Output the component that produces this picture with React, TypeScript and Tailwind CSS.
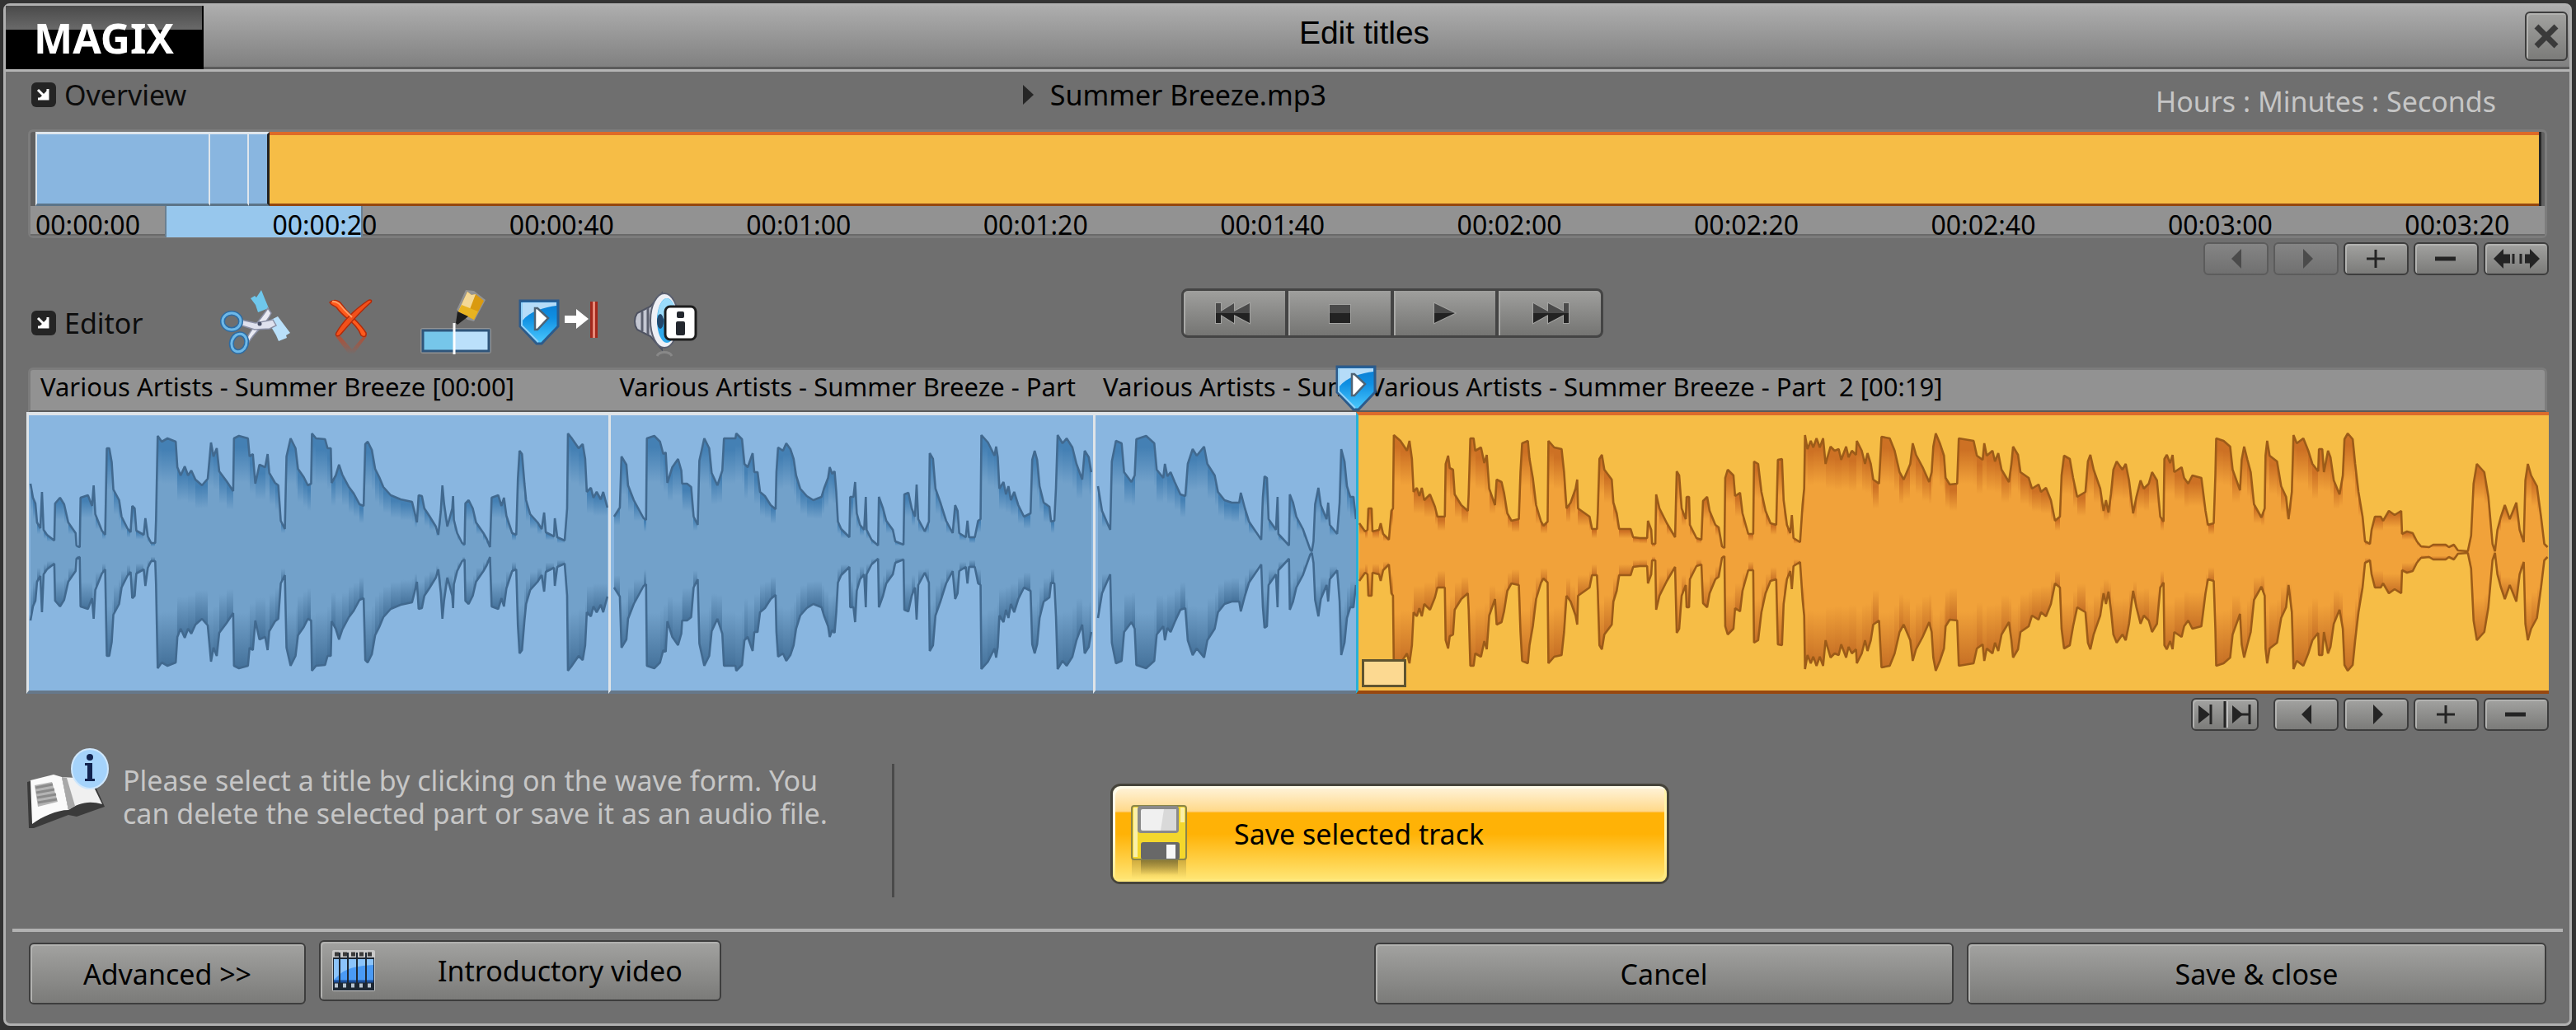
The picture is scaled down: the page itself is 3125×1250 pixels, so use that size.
import type { ReactNode } from 'react';

type Tone = 'blue' | 'orange';

interface Clip {
  id: string;
  title: string;
  from: number;
  to: number;
  tone: Tone;
  // "x,amplitude" pairs along the timeline
  wave: string;
}

const CLIPS: Clip[] = [
  {
    id: 'clip1',
    title: 'Various Artists - Summer Breeze [00:00]',
    from: 32,
    to: 738,
    tone: 'blue',
    wave:
      '34,83 37,66 40,59 42,36 46,29 48,73 50,27 54,21 63,14 64,59 70,66 75,58 80,36 89,23 90,8 94,6 95,66 104,69 109,56 111,81 113,46 121,26 125,21 127,126 130,126 133,109 135,76 142,63 145,43 152,29 156,24 158,56 161,53 163,26 172,21 174,41 177,19 181,11 186,11 187,39 189,141 194,134 201,138 211,134 213,103 217,93 222,104 226,93 230,99 235,88 243,81 250,89 254,133 257,116 261,126 264,98 273,86 281,74 282,138 288,141 299,138 301,116 305,119 308,83 313,106 320,103 323,119 325,96 332,84 336,81 339,38 344,28 346,116 351,138 357,126 360,101 367,91 372,81 376,83 377,144 382,138 393,137 396,126 400,126 401,84 406,93 410,106 414,94 422,79 428,71 435,58 440,56 442,131 445,134 450,124 454,101 459,91 464,79 473,69 485,64 499,61 502,49 505,36 507,69 511,68 514,53 520,44 528,31 531,21 534,49 536,81 538,59 542,31 548,53 549,68 550,39 554,23 560,11 563,9 564,59 568,63 573,53 577,36 586,23 590,16 594,6 596,66 604,69 608,56 611,66 614,44 621,23 626,21 628,89 630,123 633,119 636,83 638,63 643,46 652,36 657,28 660,48 662,24 672,19 673,41 676,18 685,14 688,53 689,144 693,139 702,126 707,131 710,113 712,73 717,78 720,66 724,73 729,64 732,73 737,54',
  },
  {
    id: 'clip2',
    title: 'Various Artists - Summer Breeze - Part',
    from: 738,
    to: 1326,
    tone: 'blue',
    wave:
      '742,43 749,54 751,116 757,106 759,81 766,63 778,41 781,39 782,138 791,141 798,134 802,119 805,121 807,84 813,103 820,113 824,99 825,83 831,83 836,79 839,43 844,33 846,111 852,138 858,126 861,96 868,81 874,99 876,138 890,138 891,144 898,137 901,107 905,103 911,120 913,97 917,97 920,73 926,68 933,57 939,52 940,97 942,127 948,123 952,132 957,125 961,113 964,93 969,77 977,68 985,63 995,67 998,77 1003,90 1005,103 1008,95 1011,98 1013,73 1015,37 1019,28 1029,18 1030,67 1034,67 1036,85 1038,47 1042,33 1047,27 1049,67 1050,27 1056,15 1064,8 1065,67 1070,53 1074,38 1082,27 1085,13 1095,9 1096,70 1101,72 1105,53 1109,43 1111,82 1113,40 1121,25 1126,37 1127,120 1131,113 1134,77 1140,60 1147,38 1155,23 1158,57 1161,50 1163,23 1171,18 1173,38 1175,18 1182,18 1186,38 1189,40 1190,142 1198,133 1206,117 1208,128 1210,115 1212,77 1217,85 1220,70 1223,80 1226,63 1230,73 1235,57 1242,43 1250,47 1252,112 1255,123 1258,112 1261,80 1266,60 1273,55 1275,37 1279,38 1281,78 1283,142 1289,132 1294,138 1301,127 1306,107 1313,88 1316,123 1321,115 1324,97',
  },
  {
    id: 'clip3',
    title: 'Various Artists - Sum',
    from: 1326,
    to: 1646,
    tone: 'blue',
    wave:
      '1329,80 1334,50 1344,27 1346,110 1351,135 1358,132 1361,97 1370,85 1374,93 1376,137 1388,141 1398,132 1401,100 1409,90 1411,107 1414,92 1418,97 1423,85 1430,70 1436,68 1439,107 1445,125 1450,117 1459,128 1463,107 1472,93 1476,73 1484,63 1493,60 1502,60 1504,72 1509,53 1514,37 1529,15 1531,67 1533,92 1536,90 1538,40 1547,27 1549,67 1550,22 1563,8 1564,70 1568,60 1572,43 1580,28 1589,3 1591,1 1593,13 1595,58 1599,78 1602,57 1609,40 1611,60 1613,33 1622,22 1625,60 1627,125 1631,110 1634,80 1638,67 1642,67 1645,40',
  },
  {
    id: 'clip4',
    title: 'Various Artists - Summer Breeze - Part  2 [00:19]',
    from: 1646,
    to: 3093,
    tone: 'orange',
    wave:
      '1647,35 1654,25 1657,27 1658,53 1662,53 1663,25 1671,27 1673,35 1676,22 1683,15 1686,50 1688,53 1689,142 1697,135 1705,123 1708,135 1711,113 1713,73 1717,78 1720,68 1723,78 1726,63 1733,70 1739,55 1742,43 1751,43 1752,107 1755,117 1757,102 1761,100 1763,70 1771,57 1779,50 1780,70 1782,138 1786,138 1788,123 1795,127 1799,108 1802,118 1805,77 1812,57 1814,88 1820,85 1823,72 1827,47 1832,38 1841,40 1843,97 1845,132 1852,135 1854,113 1858,90 1862,57 1868,37 1871,32 1876,37 1877,135 1884,127 1893,125 1896,97 1899,53 1904,60 1910,77 1912,88 1913,53 1927,43 1930,28 1936,28 1937,47 1939,113 1942,118 1945,100 1954,88 1956,60 1960,47 1963,28 1977,28 1980,18 1988,17 1997,17 1998,38 2002,27 2003,10 2007,10 2008,70 2012,53 2021,35 2031,18 2033,98 2036,93 2039,53 2044,40 2045,67 2048,67 2049,33 2057,17 2063,15 2065,62 2070,67 2073,50 2080,33 2084,30 2088,7 2091,5 2092,90 2095,100 2102,93 2104,68 2110,72 2113,47 2120,22 2126,22 2127,110 2132,107 2136,73 2141,50 2147,35 2154,33 2156,112 2161,113 2163,63 2167,33 2171,23 2173,45 2175,17 2183,12 2186,57 2188,77 2189,142 2192,125 2196,135 2199,127 2203,138 2207,127 2211,138 2214,107 2220,128 2225,123 2230,125 2233,112 2239,128 2242,115 2246,123 2251,118 2252,135 2258,123 2262,107 2265,120 2269,107 2272,88 2279,83 2282,140 2292,138 2298,123 2304,97 2309,88 2317,107 2320,132 2324,118 2332,103 2340,85 2343,97 2345,128 2348,144 2353,132 2358,117 2360,90 2365,82 2374,83 2376,138 2394,135 2398,117 2405,112 2407,132 2410,117 2417,123 2420,110 2424,120 2428,100 2437,85 2440,107 2442,128 2448,118 2451,97 2461,90 2465,77 2473,82 2476,73 2482,78 2488,63 2493,38 2499,43 2501,93 2504,117 2511,113 2515,90 2520,67 2530,73 2533,110 2536,118 2540,100 2548,77 2552,50 2555,63 2558,48 2561,70 2564,100 2568,110 2575,100 2579,107 2583,87 2588,47 2592,67 2597,87 2601,77 2607,83 2611,97 2617,87 2621,43 2625,37 2626,113 2629,118 2633,108 2636,118 2638,97 2647,103 2650,90 2655,83 2660,93 2671,90 2676,50 2679,33 2686,35 2688,93 2689,138 2698,135 2706,128 2709,100 2718,75 2720,112 2723,128 2727,112 2731,97 2735,58 2744,42 2748,53 2749,117 2751,135 2754,117 2763,110 2768,80 2774,67 2777,40 2781,73 2783,142 2787,132 2795,138 2801,123 2806,107 2813,98 2814,125 2818,125 2820,97 2825,123 2828,115 2832,87 2839,70 2843,93 2845,137 2849,144 2855,137 2858,107 2862,73 2867,43 2870,13 2876,10 2878,27 2882,43 2889,43 2892,38 2899,50 2906,45 2914,50 2915,22 2921,25 2928,23 2933,13 2938,7 2948,6 2953,9 2968,9 2972,6 2978,9 2983,2 2995,1 2999,20 3002,83 3006,107 3015,97 3020,67 3025,10 3028,1 3031,27 3035,42 3040,57 3046,40 3054,60 3058,27 3063,12 3065,87 3068,107 3072,93 3079,80 3084,43 3088,10 3092,6',
  },
];

const TIMES = [
  '00:00:00',
  '00:00:20',
  '00:00:40',
  '00:01:00',
  '00:01:20',
  '00:01:40',
  '00:02:00',
  '00:02:20',
  '00:02:40',
  '00:03:00',
  '00:03:20',
];

const WAVE_COLORS: Record<Tone, { top: string; mid: string; bottom: string; line: string }> = {
  blue: { top: '#4480b4', mid: '#72a1ca', bottom: '#44719a', line: '#41698f' },
  orange: { top: '#cd7124', mid: '#f1a23a', bottom: '#c66f25', line: '#9c5b18' },
};

const BUTTON =
  'flex items-center justify-center rounded-md border-2 border-[#3d3d3d] bg-linear-to-b from-[#a2a2a0] to-[#7b7b79] shadow-[inset_2px_2px_0_#b2b2b0]';

function Waveform({ clip }: { clip: Clip }) {
  const pts = clip.wave.split(' ').map((p) => p.split(',').map(Number));
  const c = WAVE_COLORS[clip.tone];
  const mid = 166;
  const upper = pts.map(([x, a]) => `${x},${mid - a}`).join(' ');
  const lower = pts.map(([x, a]) => `${x},${mid + a}`).join(' ');

  return (
    <svg viewBox={`${clip.from} 0 ${clip.to - clip.from} 334`} preserveAspectRatio="none" className="block h-full w-full" aria-hidden>
      <defs>
        <linearGradient id={clip.id} x1="0" y1="0" x2="0" y2="1">
          <stop offset="0" stopColor={c.top} />
          <stop offset="0.05" stopColor={c.top} />
          <stop offset="0.2" stopColor={c.mid} />
          <stop offset="0.76" stopColor={c.mid} />
          <stop offset="1" stopColor={c.bottom} />
        </linearGradient>
      </defs>
      <g fill={`url(#${clip.id})`} shapeRendering="crispEdges">
        {pts.slice(1).map(([x, a], i) => {
          const [px, pa] = pts[i];
          return <path key={x} d={`M${px} ${mid - pa}L${x} ${mid - a}V${mid + a}L${px} ${mid + pa}Z`} />;
        })}
      </g>
      <g fill="none" stroke={c.line} strokeWidth="2.6" strokeLinejoin="bevel">
        <polyline points={upper} />
        <polyline points={lower} />
      </g>
    </svg>
  );
}

function Shield() {
  return (
    <>
      <defs>
        <linearGradient id="shield" x1="0" y1="0" x2="0" y2="1">
          <stop offset="0" stopColor="#0b7bd0" />
          <stop offset="0.4" stopColor="#0f8fe2" />
          <stop offset="1" stopColor="#4ccaff" />
        </linearGradient>
      </defs>
      <path d="M2 2H48V33L28 54H22L2 33Z" fill="url(#shield)" stroke="#2c5b8b" strokeWidth="3" />
      <path d="M4 4H46V8C32 10 14 14 4 27Z" fill="#b5dcf8" />
      <path d="M4 4V32L24 52" fill="none" stroke="#8fd0f7" strokeWidth="2" />
      <path d="M20 11H23L36 23L23 37H20Z" fill="#fff" stroke="#4f6374" strokeWidth="2.5" />
    </>
  );
}

function ScissorsIcon() {
  return (
    <svg width="88" height="84" viewBox="0 0 88 84" aria-hidden>
      <path d="M39 12L44 9L46 11L52 2L56 12L61 24L48 29L45 20Z" fill="#6fc7ec" />
      <path d="M60 40L72 34L87 54L82 57L83 60L73 64L70 57Z" fill="#b9e0fa" />
      <path d="M34 62C38 50 50 40 60 24L64 30C58 44 44 52 37 65Z" fill="#e9eaf3" stroke="#8a8fa5" strokeWidth="1.5" />
      <path d="M27 38L45 42L66 38L70 45L62 49L44 50L28 45Z" fill="#dfe1ee" stroke="#8a8fa5" strokeWidth="1.5" />
      <circle cx="50" cy="43" r="2.5" fill="#4a5068" />
      <ellipse cx="16" cy="40" rx="11" ry="10" fill="none" stroke="#2d6ca4" strokeWidth="6" />
      <ellipse cx="16" cy="40" rx="11" ry="10" fill="none" stroke="#6db8e8" strokeWidth="3" />
      <ellipse cx="25" cy="66" rx="9" ry="11" fill="none" stroke="#2d6ca4" strokeWidth="6" transform="rotate(18 25 66)" />
      <ellipse cx="25" cy="66" rx="9" ry="11" fill="none" stroke="#6db8e8" strokeWidth="3" transform="rotate(18 25 66)" />
    </svg>
  );
}

function DeleteIcon() {
  return (
    <svg width="56" height="84" viewBox="0 0 56 84" aria-hidden>
      <defs>
        <linearGradient id="fade" x1="0" y1="0" x2="0" y2="1">
          <stop offset="0" stopColor="#d0401a" stopOpacity="0.7" />
          <stop offset="1" stopColor="#d0401a" stopOpacity="0" />
        </linearGradient>
      </defs>
      <path d="M10 58L26 80L32 80L48 58L44 58L30 74L16 58Z" fill="url(#fade)" />
      <path d="M3 17C8 13 14 14 18 20C26 32 40 42 47 54C48 58 45 60 41 57C36 42 20 36 12 24C10 21 5 21 3 17Z" fill="#ff5a1c" stroke="#b02a0a" strokeWidth="1.5" />
      <path d="M53 17C42 26 28 42 16 56C13 59 9 58 11 54C20 38 36 24 49 15C52 13 55 14 53 17Z" fill="#f2501a" stroke="#b02a0a" strokeWidth="1.5" />
      <path d="M6 16C12 15 16 20 20 25L30 35" fill="none" stroke="#ff9a62" strokeWidth="2" />
    </svg>
  );
}

function MarkerIcon() {
  return (
    <svg width="88" height="84" viewBox="0 0 88 84" aria-hidden>
      <rect x="1" y="48" width="86" height="31" rx="3" fill="#fff" opacity="0.25" />
      <rect x="4" y="51" width="39" height="24" fill="#76c6ea" />
      <rect x="43" y="51" width="40" height="24" fill="#bbe0fb" />
      <rect x="4" y="51" width="80" height="25" fill="none" stroke="#2f557a" strokeWidth="3" />
      <path d="M42 42V80" stroke="#fff" strokeWidth="3" />
      <path d="M45 26L56 2L66 3L80 14L66 40L58 38Z" fill="#fff" opacity="0.25" />
      <path d="M47 28L58 4L63 8L68 7L78 15L66 38Z" fill="#d99a10" />
      <path d="M47 28L58 4L63 8L68 7L58 33Z" fill="#f4d896" />
      <path d="M47 28L51 20L71 28L66 38Z" fill="#e8b320" />
      <path d="M46 28L59 34L46 44L44 42Z" fill="#1d1d1d" />
    </svg>
  );
}

function CueIcon() {
  return (
    <svg width="100" height="84" viewBox="0 0 100 84" aria-hidden>
      <g transform="translate(0 13)">
        <Shield />
      </g>
      <path d="M56 33H70V25L85 37L70 49V42H56Z" fill="#fff" />
      <rect x="87" y="16" width="9" height="44" fill="#a2281c" />
      <rect x="90" y="16" width="3" height="44" fill="#e88a78" />
    </svg>
  );
}

function SpeakerInfoIcon() {
  return (
    <svg width="78" height="84" viewBox="0 0 78 84" aria-hidden>
      <path d="M34 6L20 22L4 30C0 36 0 44 4 50L20 58L34 74Z" fill="#c4c7d2" stroke="#4e5261" strokeWidth="2" />
      <path d="M10 28V52M17 24V56" stroke="#5b5f6e" strokeWidth="3" />
      <ellipse cx="37" cy="39" rx="17" ry="33" fill="#eef0f6" stroke="#5b6070" strokeWidth="2" />
      <ellipse cx="40" cy="39" rx="12" ry="27" fill="#2fa8ea" />
      <path d="M40 12C50 14 52 30 52 39C42 42 34 36 29 32C30 20 35 12 40 12Z" fill="#9bdcfb" />
      <ellipse cx="32" cy="40" rx="4" ry="9" fill="#24476b" />
      <path d="M28 82C31 76 43 76 46 82" fill="none" stroke="#9a9a9a" strokeWidth="3" opacity="0.6" />
      <rect x="38" y="22" width="37" height="40" rx="6" fill="#fff" stroke="#1c1c1c" strokeWidth="3" />
      <rect x="52" y="28" width="9" height="8" rx="2" fill="#23272e" />
      <rect x="51" y="40" width="11" height="17" rx="2" fill="#23272e" />
    </svg>
  );
}

function BookIcon() {
  return (
    <svg width="100" height="100" viewBox="0 0 100 100" aria-hidden>
      <path d="M0 42L2 98L8 98L50 82L60 84L94 72L84 50L30 34Z" fill="#3a3a3a" />
      <path d="M4 40L32 33L42 36L50 76C36 76 18 84 6 93Z" fill="#fafafa" />
      <path d="M42 36L76 38L91 69C74 64 62 68 50 76Z" fill="#f0f0f0" />
      <path d="M42 36L50 76L58 71L48 37Z" fill="#a8a8a8" />
      <path d="M9 46L30 42L37 66L13 72Z" fill="#b4b4b4" />
      <path d="M10 49L31 45M11 55L33 51M12 61L35 57M13 67L36 63" stroke="#8a8a8a" strokeWidth="3" />
      <ellipse cx="76" cy="26" rx="22" ry="24" fill="#a5d3fb" stroke="#cfe7fc" strokeWidth="2" />
      <circle cx="76" cy="12" r="4" fill="#12234f" />
      <path d="M70 19H79V38H82V41H70V38H73V22H70Z" fill="#12234f" />
    </svg>
  );
}

function FloppyIcon() {
  return (
    <svg width="68" height="92" viewBox="0 0 68 92" aria-hidden>
      <defs>
        <linearGradient id="mirror" x1="0" y1="0" x2="0" y2="1">
          <stop offset="0" stopColor="#6e6433" stopOpacity="0.75" />
          <stop offset="1" stopColor="#6e6433" stopOpacity="0" />
        </linearGradient>
      </defs>
      <path d="M1 67H67V90H1Z" fill="url(#mirror)" opacity="0.45" />
      <path d="M12 67H57V86H12Z" fill="url(#mirror)" />
      <rect x="1" y="2" width="66" height="65" rx="3" fill="#f4d72c" stroke="#8b8549" strokeWidth="2" />
      <rect x="3" y="4" width="5" height="60" fill="#fbf0a8" />
      <rect x="60" y="4" width="5" height="18" fill="#fbf0a8" />
      <rect x="8" y="2" width="50" height="33" rx="4" fill="#8a8a8a" />
      <rect x="12" y="6" width="43" height="26" rx="2" fill="#f0f0f0" />
      <path d="M40 6H55V32H36Z" fill="#d9d9d9" />
      <rect x="12" y="46" width="47" height="21" rx="3" fill="#686868" />
      <rect x="43" y="49" width="11" height="17" fill="#f7f7f7" />
    </svg>
  );
}

function FilmIcon() {
  return (
    <svg width="52" height="50" viewBox="0 0 52 50" aria-hidden>
      <rect width="52" height="50" rx="2" fill="#c9c9c9" />
      <rect x="1" y="9" width="50" height="40" fill="#1d2733" />
      <rect x="2" y="11" width="48" height="27" fill="#8cc4fa" />
      <path d="M2 36C10 30 12 20 50 18V38H2Z" fill="#4a9af4" />
      <path d="M2 38H50" stroke="#1c4f9a" strokeWidth="3" />
      <path d="M9 3V47M19 3V47M30 3V47M41 3V47" stroke="#1d2733" strokeWidth="2" />
      <path d="M3 5H50" stroke="#3a3a3a" strokeWidth="5" strokeDasharray="5 5" />
      <path d="M3 43H50" stroke="#b8c4d0" strokeWidth="5" strokeDasharray="4 6" />
    </svg>
  );
}

function SectionLabel({ children }: { children: ReactNode }) {
  return (
    <h2 className="flex items-center gap-[10px] text-[34px] leading-10 text-[#0c0c0c]">
      <svg width="30" height="30" viewBox="0 0 30 30" aria-hidden>
        <rect width="30" height="30" rx="6" fill="#242424" />
        <path d="M8 9L15 16M20 8V20H8" fill="none" stroke="#fff" strokeWidth="3" />
        <path d="M20 9V20H9Z" fill="#fff" />
      </svg>
      {children}
    </h2>
  );
}

const GLYPHS: Record<string, ReactNode> = {
  prev: <path d="M42 7V31L30 19Z" fill="currentColor" />,
  next: <path d="M32 7V31L44 19Z" fill="currentColor" />,
  plus: <path d="M24 19H46M35 8V30" stroke="currentColor" strokeWidth="3" />,
  minus: <path d="M22 19H47" stroke="currentColor" strokeWidth="5" />,
  fit: (
    <>
      <path d="M20 7V31L8 19Z" fill="currentColor" />
      <path d="M52 7V31L64 19Z" fill="currentColor" />
      <path d="M18 19H28M46 19H54" stroke="currentColor" strokeWidth="11" />
      <path d="M32 13V25M41 13V25" stroke="currentColor" strokeWidth="3" />
    </>
  ),
};

function SmallButton({ glyph, label, disabled }: { glyph: string; label: string; disabled?: boolean }) {
  return (
    <button
      aria-label={label}
      disabled={disabled}
      className={`${BUTTON} h-10 w-[79px] text-[#242424] disabled:border-[#5c5c5c] disabled:from-[#858585] disabled:to-[#707070] disabled:text-[#4b4b4b] disabled:shadow-none`}
    >
      <svg width="72" height="38" viewBox="0 0 72 38" aria-hidden>
        {GLYPHS[glyph]}
      </svg>
    </button>
  );
}

function TransportButton({ label, children }: { label: string; children: ReactNode }) {
  return (
    <button aria-label={label} className="flex flex-1 items-center justify-center border-l-4 border-[#444] shadow-[inset_2px_0_0_#a8a8a6] first:border-l-0">
      <svg width="52" height="30" viewBox="0 0 52 30" fill="url(#transport)" stroke="#a3a3a1" strokeWidth="2" paintOrder="stroke" aria-hidden>
        {children}
      </svg>
    </button>
  );
}

export default function App() {
  return (
    <div className="flex min-h-screen flex-col bg-[#333] pt-1 pr-[5px] pb-[5px] pl-1 font-['Noto_Sans',sans-serif] text-black">
      <main className="flex flex-1 flex-col rounded-lg border-[3px] border-[#b0b0b0] bg-[#6f6f6f]">
        <header className="flex h-20 items-stretch border-b-[3px] border-[#b5b5b5] bg-linear-to-b from-[#adadad] to-[#7f7f7f] shadow-[inset_0_-3px_0_#5c5c5c]">
          <div className="flex w-60 items-center justify-center border-r-2 border-black bg-linear-to-b from-[#4a4a4a] from-0% via-[#6a6a6a] via-38% to-black to-38% text-[50px] leading-none font-bold text-white">
            MAGIX
          </div>
          <h1 className="flex flex-1 items-center justify-center pb-3 font-['Liberation_Sans',Arial,sans-serif] text-[39px] leading-10">Edit titles</h1>
          <div className="flex items-center pr-[2px] pb-1">
            <button aria-label="Close" className={`${BUTTON} h-[60px] w-[52px]`}>
              <svg width="30" height="30" viewBox="0 0 30 30" stroke="#3a3a3a" strokeWidth="7" aria-hidden>
                <path d="M3 3L27 27M27 3L3 27" />
              </svg>
            </button>
          </div>
        </header>

        <div className="flex flex-col px-[25px]">
          <div className="grid h-[70px] grid-cols-[1208fr_1380fr_473fr] items-start px-[6px] pt-2">
            <SectionLabel>Overview</SectionLabel>
            <p className="flex items-center gap-5 text-[34px] leading-10">
              <svg width="13" height="24" viewBox="0 0 13 24" aria-hidden>
                <path d="M0 0L13 12L0 24Z" fill="#262626" />
              </svg>
              Summer Breeze.mp3
            </p>
            <p className="pt-2 text-[34px] leading-10 whitespace-nowrap text-[#c6c6c6]">Hours : Minutes : Seconds</p>
          </div>

          <div className="mx-[2px] rounded-md border-[3px] border-[#7c7c7c] bg-[#606060]">
            <div className="mr-[4px] ml-[6px] grid h-[90px] grid-cols-[212fr_47fr_25fr_2754fr] border-r-[3px] border-[#262626]">
              <div className="border-x-2 border-t-[3px] border-b-[3px] border-x-[#dfe6ec] border-t-[#dfe6ec] border-b-[#5c7488] bg-[#89b6e0]" />
              <div className="border-t-[3px] border-r-2 border-b-[3px] border-t-[#dfe6ec] border-r-[#dfe6ec] border-b-[#5c7488] bg-[#89b6e0]" />
              <div className="border-t-[3px] border-r-[3px] border-b-[3px] border-t-[#dfe6ec] border-r-[#222] border-b-[#5c7488] bg-[#89b6e0]" />
              <div className="border-t-4 border-b-[3px] border-t-[#dd6a27] border-b-[#94470f] bg-[#f6bd46]" />
            </div>
            <div className="relative h-9 border-b-2 border-[#6a6a6a] bg-[#929292]">
              <div className="absolute top-0 left-[163px] h-[38px] w-[240px] border-x-2 border-[#6b7f90] bg-[#97c7ed]" />
              <ol className="relative grid grid-cols-[repeat(10,288fr)_170fr] pl-[6px] text-[32px] leading-[46px]">
                {TIMES.map((t) => (
                  <li key={t} className="h-9 whitespace-nowrap">
                    {t}
                  </li>
                ))}
              </ol>
            </div>
          </div>

          <div className="flex justify-end gap-[6px] pt-[5px]">
            <SmallButton glyph="prev" label="Scroll left" disabled />
            <SmallButton glyph="next" label="Scroll right" disabled />
            <SmallButton glyph="plus" label="Zoom in" />
            <SmallButton glyph="minus" label="Zoom out" />
            <SmallButton glyph="fit" label="Fit to window" />
          </div>

          <div className="grid h-28 grid-cols-[1401fr_1660fr] items-start pt-4">
            <div className="flex items-center gap-11 pl-[6px]">
              <div className="w-[183px]">
                <SectionLabel>Editor</SectionLabel>
              </div>
              <button aria-label="Cut">
                <ScissorsIcon />
              </button>
              <button aria-label="Delete">
                <DeleteIcon />
              </button>
              <div className="flex gap-8 pl-3">
                <button aria-label="Set track marker">
                  <MarkerIcon />
                </button>
                <button aria-label="Jump to end of track">
                  <CueIcon />
                </button>
                <button aria-label="Track information" className="pl-2">
                  <SpeakerInfoIcon />
                </button>
              </div>
            </div>
            <div className="flex h-[60px] w-[512px] overflow-hidden rounded-lg border-[3px] border-[#444] bg-linear-to-b from-[#9f9f9d] to-[#757573]">
              <TransportButton label="Previous">
                <linearGradient id="transport" gradientUnits="userSpaceOnUse" x1="0" y1="0" x2="0" y2="30">
                  <stop offset="0.5" stopColor="#4a4a4a" />
                  <stop offset="0.5" stopColor="#222" />
                </linearGradient>
                <path d="M4 3H10V13L26 3V13L45 3V27L26 17V27L10 17V27H4Z" />
              </TransportButton>
              <TransportButton label="Stop">
                <path d="M14 5H39V27H14Z" />
              </TransportButton>
              <TransportButton label="Play">
                <path d="M14 3L39 15L14 27Z" />
              </TransportButton>
              <TransportButton label="Next">
                <path d="M6 3L24 13V3L43 13V3H49V27H43V17L24 27V17L6 27Z" />
              </TransportButton>
            </div>
          </div>

          <div>
            <div className="mx-[2px] grid h-[54px] grid-cols-[704fr_588fr_320fr_1445fr] rounded-t-md border-x-[3px] border-t-[3px] border-b-2 border-[#7c7c7c] border-b-[#5a5a5a] bg-[#929292] text-[31px] leading-10">
              {CLIPS.map((clip) => (
                <div key={clip.id} className="relative min-w-0">
                  <span className={`block overflow-hidden whitespace-pre ${clip.tone === 'orange' ? 'pl-4' : 'pl-[12px]'}`}>{clip.title}</span>
                  {clip.tone === 'orange' && (
                    <svg className="absolute top-[-6px] left-[-25px]" width="50" height="56" viewBox="0 0 50 56" aria-hidden>
                      <Shield />
                    </svg>
                  )}
                </div>
              ))}
            </div>
            <div className="grid h-[342px] grid-cols-[706fr_588fr_320fr_1447fr]">
              {CLIPS.map((clip) => (
                <div
                  key={clip.id}
                  className={`relative min-w-0 border-t-4 border-b-4 border-l-[3px] ${
                    clip.tone === 'orange'
                      ? 'border-t-[#dc6b2b] border-b-[#98480f] border-l-[#27b0d8] bg-[#f6bd46]'
                      : 'border-t-[#dfe4e8] border-b-[#66788a] border-l-[#dfe4e8] bg-[#89b6e0]'
                  }`}
                >
                  <Waveform clip={clip} />
                  {clip.tone === 'orange' && <div className="absolute bottom-1 left-1 h-[34px] w-[54px] border-[3px] border-[#5f5430] bg-[#fcd991]" />}
                </div>
              ))}
            </div>
          </div>

          <div className="flex justify-end gap-[6px] pt-[5px]">
            <button aria-label="Previous or next pause" className={`${BUTTON} mr-3 h-10 w-[82px]`}>
              <svg width="76" height="38" viewBox="0 0 76 38" aria-hidden>
                <path d="M6 8L20 19L6 30Z" fill="#242424" />
                <path d="M21 7V31M38 3V35M68 7V31M55 19H68" stroke="#242424" strokeWidth="3" />
                <path d="M41 3V35" stroke="#c0c0c0" strokeWidth="2" />
                <path d="M47 8L60 19L47 30Z" fill="#242424" />
              </svg>
            </button>
            <SmallButton glyph="prev" label="Scroll wave left" />
            <SmallButton glyph="next" label="Scroll wave right" />
            <SmallButton glyph="plus" label="Zoom wave in" />
            <SmallButton glyph="minus" label="Zoom wave out" />
          </div>
        </div>

        <section className="grid flex-1 grid-cols-[1050fr_2011fr] items-start px-[26px] pt-4 pb-6">
          <div className="flex gap-4 pt-1">
            <BookIcon />
            <p className="pt-5 text-[34px] leading-10 whitespace-nowrap text-[#c6c6c6]">
              Please select a title by clicking on the wave form. You
              <br />
              can delete the selected part or save it as an audio file.
            </p>
          </div>
          <div className="flex pt-6">
            <div className="h-[162px] w-[3px] bg-[#4a4a4a]" />
            <button className="mt-6 ml-[262px] flex h-[122px] w-[678px] items-center rounded-xl border-[3px] border-[#45433a] bg-linear-to-b from-[#fff4dc] from-0% via-[#ffd98a] via-26% to-[#ffb206] to-28% text-[34px] leading-10 shadow-[inset_3px_3px_0_#fffbe8,inset_-3px_-3px_0_#fff3a8]">
              <span className="flex h-full w-full items-center gap-[57px] rounded-lg bg-linear-to-b from-transparent from-50% to-[#ffe87a] pl-[22px]">
                <span className="pt-5">
                  <FloppyIcon />
                </span>
                Save selected track
              </span>
            </button>
          </div>
        </section>

        <footer className="mx-2 flex items-start gap-4 border-t-4 border-[#b2b2b2] px-5 pt-[10px] pb-[23px] text-[34px] leading-10">
          <button className={`${BUTTON} mt-[3px] h-[75px] w-[336px]`}>Advanced &gt;&gt;</button>
          <button className={`${BUTTON} h-[74px] w-[488px] justify-start gap-[76px] pl-[14px]`}>
            <FilmIcon />
            Introductory video
          </button>
          <div className="mt-[3px] ml-auto flex gap-4">
            <button className={`${BUTTON} h-[75px] w-[703px]`}>Cancel</button>
            <button className={`${BUTTON} h-[75px] w-[703px]`}>Save &amp; close</button>
          </div>
        </footer>
      </main>
    </div>
  );
}
